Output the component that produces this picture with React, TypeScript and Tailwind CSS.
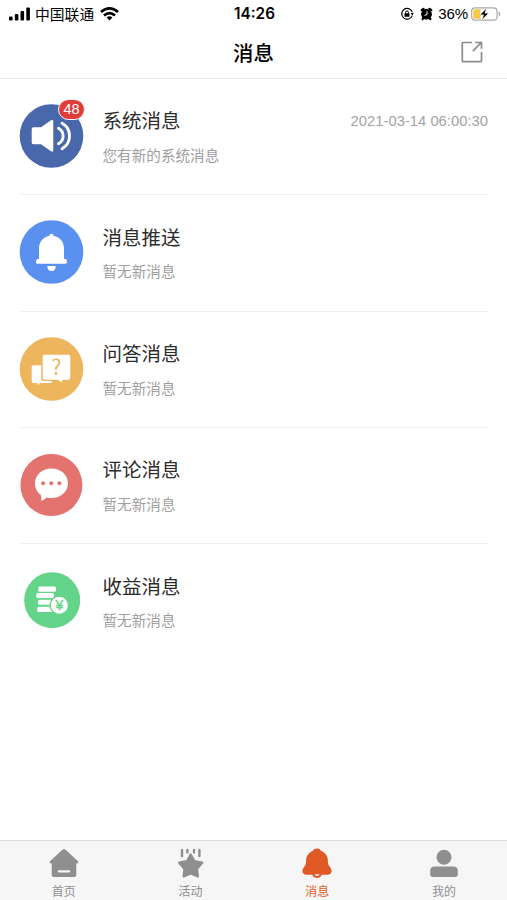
import React, { useState } from "react";
import clsx from "clsx";

interface IMessage {
  id: number;
  title: string;
  content: string;
  date?: string;
  count?: number;
  icon: JSX.Element;
}

interface ITab {
  name: string;
  icon: JSX.Element;
}

const SystemIcon = (
  <svg className="w-16 h-16 overflow-visible" viewBox="0.5 0 64 64">
    <circle cx="32" cy="32" r="31.8" fill="#4967ab" />
    <path
      d="M14 23.3h7.5L31.5 16.3q2.3-1.2 2.3 1v29q0 2.2-2.3 1L21.5 40.3H14q-1.8 0-1.8-1.8V25.1q0-1.8 1.8-1.8z"
      fill="#fff"
    />
    <path
      d="M39 24.3q4.6 2.6 4.6 7.7t-4.6 7.7M42.6 19.3q7.4 4.2 7.4 12.7t-7.4 12.7"
      fill="none"
      stroke="#fff"
      strokeWidth="2.9"
      strokeLinecap="round"
    />
  </svg>
);

const PushIcon = (
  <svg className="w-16 h-16 overflow-visible" viewBox="0.5 0 64 64">
    <circle cx="32" cy="32" r="31.8" fill="#5a90f0" />
    <path
      d="M32 13.8c1.5 0 2 1 2.3 2.2 6.4 1.2 10.2 6 10.2 12.5V39h1.4c2.1 0 2.1 4.8 0 4.8H18.1c-2.1 0-2.1-4.8 0-4.8h1.4V28.5c0-6.5 3.8-11.3 10.2-12.5.3-1.2.8-2.2 2.3-2.2z"
      fill="#fff"
    />
    <path d="M27.8 46h8.4q0 5-4.2 5t-4.2-5z" fill="#fff" />
  </svg>
);

const QuestionIcon = (
  <svg className="w-16 h-16 overflow-visible" viewBox="0.5 0 64 64">
    <circle cx="32" cy="32" r="31.8" fill="#edb55c" />
    <path
      d="M14 28.3h7.7v13.2q0 2.5 2.5 2.5h8v2H20.8l-1.8 2-1.8-2H14q-1.8 0-1.8-1.8V30.1q0-1.8 1.8-1.8z"
      fill="#fff"
    />
    <path
      d="M25 17.8h24q1.8 0 1.8 1.8v21.3q0 1.8-1.8 1.8h-5.3l-2.5 2.6-2.5-2.6H25q-1.8 0-1.8-1.8V19.6q0-1.8 1.8-1.8z"
      fill="#fff"
    />
    <text
      x="36.8"
      y="37.6"
      textAnchor="middle"
      fontSize="21.5"
      fill="#edb55c"
      fontFamily="Noto Sans CJK SC, sans-serif"
    >
      ?
    </text>
  </svg>
);

const CommentIcon = (
  <svg className="w-16 h-16 overflow-visible" viewBox="0.5 0 64 64">
    <circle cx="31.9" cy="32" r="31" fill="#e4736f" />
    <path
      d="M32 15.5c9.5 0 16.5 6.4 16.5 14.7S41.5 45 32 45c-1.7 0-3.3-.1-4.8-.6-1.7 1.7-3.5 2.8-5.7 3.4.6-1.6.5-3.7-.2-5.7-3.5-2.7-5.8-7-5.8-11.9 0-8.3 7-14.7 16.5-14.7z"
      fill="#fff"
    />
    <circle cx="23.6" cy="30.3" r="2" fill="#e4736f" />
    <circle cx="31.8" cy="30.3" r="2" fill="#e4736f" />
    <circle cx="39.9" cy="30.3" r="2" fill="#e4736f" />
  </svg>
);

const IncomeIcon = (
  <svg className="w-16 h-16 overflow-visible" viewBox="0.5 0.6 64 64">
    <circle cx="32.7" cy="31.8" r="28" fill="#63d48a" />
    <g fill="#fff">
      <rect x="18.8" y="18.1" width="17.7" height="5.2" rx="1.5" />
      <rect x="16.8" y="24.7" width="17.7" height="5" rx="1.5" />
      <rect x="18.6" y="31.4" width="15" height="5" rx="1.5" />
      <rect x="17.7" y="38.3" width="17" height="5.2" rx="1.5" />
    </g>
    <circle cx="39.8" cy="36.8" r="9.2" fill="#fff" stroke="#63d48a" strokeWidth="1.4" />
    <text
      x="39.8"
      y="41.7"
      textAnchor="middle"
      fontSize="14"
      fill="#63d48a"
      stroke="#63d48a"
      strokeWidth=".4"
      fontFamily="Liberation Sans, sans-serif"
    >
      ¥
    </text>
  </svg>
);

const messages: IMessage[] = [
  {
    id: 1,
    title: "系统消息",
    content: "您有新的系统消息",
    date: "2021-03-14 06:00:30",
    count: 48,
    icon: SystemIcon,
  },
  { id: 2, title: "消息推送", content: "暂无新消息", icon: PushIcon },
  { id: 3, title: "问答消息", content: "暂无新消息", icon: QuestionIcon },
  { id: 4, title: "评论消息", content: "暂无新消息", icon: CommentIcon },
  { id: 5, title: "收益消息", content: "暂无新消息", icon: IncomeIcon },
];

const tabs: ITab[] = [
  {
    name: "首页",
    icon: (
      <svg className="w-[30px] h-[30px]" viewBox="0 0 30 30">
        <path
          d="M13.7 1.5q1.3-1 2.6 0L28.8 13q1.3 1.7-.7 2.6h-.8v11.4q0 2-2 2H4.7q-2 0-2-2V15.6H1.9q-2-.9-.7-2.6z"
          fill="currentColor"
        />
        <rect x="8.8" y="22.3" width="12.4" height="2.3" rx="1" fill="#f6f6f6" />
      </svg>
    ),
  },
  {
    name: "活动",
    icon: (
      <svg className="w-[30px] h-[30px]" viewBox="0.3 0 30 30">
        <path
          d="M15 6.6l3.7 6.7 7.8 1.5-5.3 6.1.9 7.5L15 25.4l-7.1 3 .9-7.5-5.3-6.1 7.8-1.5z"
          fill="currentColor"
          stroke="currentColor"
          strokeWidth="2.4"
          strokeLinejoin="round"
        />
        <path
          d="M6.3 2v6M11.7 2v2.4M18.3 2v2.4M23.7 2v6"
          stroke="currentColor"
          strokeWidth="2.4"
          strokeLinecap="round"
        />
      </svg>
    ),
  },
  {
    name: "消息",
    icon: (
      <svg className="w-[30px] h-[30px]" viewBox="0 0 30 30">
        <path
          d="M15 .6c2 0 3.3.9 3.9 2.2 4.6 1.7 7 5.4 7 10 0 2.7.4 4.3 2 6.2 3 3.5 1.8 7.7-2.6 7.7h-5.6c-.5 1.9-2.2 3.2-4.7 3.2s-4.2-1.300-4.700-3.200H4.700c-4.400 0-5.600-4.200-2.600-7.700 1.600-1.900 2-3.500 2-6.200 0-4.600 2.400-8.300 7-10C11.700 1.500 13 .6 15 .6z"
          fill="currentColor"
        />
        <path d="M12.400 26.300h5.200q-.5 1.700-2.600 1.700t-2.600-1.700z" fill="#f6f6f6" />
      </svg>
    ),
  },
  {
    name: "我的",
    icon: (
      <svg className="w-[30px] h-[30px]" viewBox="0 0 30 30">
        <circle cx="15" cy="9.200" r="7.500" fill="currentColor" />
        <path
          d="M5.500 18.400h19q4.300 0 4.300 4.600v3q0 3-2.500 3H3.700q-2.500 0-2.500-3v-3q0-4.600 4.300-4.600z"
          fill="currentColor"
        />
      </svg>
    ),
  },
];

const StatusBar = (): JSX.Element => {
  return (
    <div className="flex justify-between items-center h-[27px] pl-[9px] pr-[6px] text-black">
      <div className="flex items-center w-[200px]">
        <svg className="w-[22px] h-[14px]" viewBox="0 0 22 14">
          <rect x="0" y="9.5" width="3.6" height="4" rx="1" />
          <rect x="5.8" y="7" width="3.6" height="6.5" rx="1" />
          <rect x="11.5" y="4" width="3.6" height="9.5" rx="1" />
          <rect x="17.3" y="0.5" width="3.6" height="13" rx="1" />
        </svg>
        <span className="ml-1 text-[14.8px] leading-5">中国联通</span>
        <svg className="w-[19px] h-[14px] ml-[6px]" viewBox="0 0 19 14">
          <g fill="none" stroke="#000" strokeWidth="2.6">
            <path d="M1 5q8.5-7.2 17 0" />
            <path d="M4 8.4q5.5-4.7 11 0" />
          </g>
          <path d="M9.5 13.4l-2.9-2.9q2.9-2.3 5.8 0z" />
        </svg>
      </div>
      <span className="pt-[2px] -ml-px text-[15.3px] font-semibold font-[Inter,sans-serif]">
        14:26
      </span>
      <div className="flex justify-end items-center w-[200px]">
        <svg className="w-[14px] h-[14px]" viewBox="0 0 14 14">
          <path
            d="M12.2 8.6A5.4 5.4 0 1 1 12.2 5"
            fill="none"
            stroke="#000"
            strokeWidth="1.2"
          />
          <path d="M10.6 6h3.2l-1.6 2.5z" />
          <rect x="4.5" y="6.2" width="5" height="3.6" rx=".6" />
          <path d="M5.6 6.5V5.2q0-1.2 1.4-1.2t1.4 1.2v1.3" fill="none" stroke="#000" />
        </svg>
        <svg className="w-[13px] h-[14px] ml-[6px]" viewBox="0 0 13 14">
          <circle cx="6.5" cy="7.2" r="5.4" />
          <path
            d="M1.7 3.2L3.5 1.8M11.3 3.2L9.5 1.8M2.6 12l1.5-2M10.4 12l-1.5-2"
            stroke="#000"
            strokeWidth="2.2"
            strokeLinecap="round"
          />
          <path d="M7 4.3v3.3L4.5 8.4" fill="none" stroke="#fff" />
        </svg>
        <span className="ml-[5px] pt-px text-[15px] tracking-[-0.1px] font-['Liberation_Sans',sans-serif]">
          36%
        </span>
        <svg className="w-[30px] h-[14px] ml-[3px]" viewBox="0 0 30 14">
          <rect
            x=".7"
            y=".8"
            width="25.4"
            height="12.4"
            rx="3.5"
            fill="#fff"
            stroke="#aaa"
            strokeWidth="1.2"
          />
          <path d="M4 2.3h5.5v9.4H4q-1.7 0-1.7-1.7V4q0-1.7 1.7-1.7z" fill="#f7c945" />
          <path d="M27.6 4.8q1.8.5 1.8 2.2t-1.8 2.2z" fill="#aaa" />
          <path
            d="M15.3 1.5L9.3 7.8h3.5L11.2 12.500l6.200-6.300h-3.600z"
            stroke="#fff"
            strokeWidth=".3"
          />
        </svg>
      </div>
    </div>
  );
};

const Header = (): JSX.Element => {
  return (
    <div className="grid grid-cols-3 items-center h-[52px] px-6 border-b border-[#e6e6e6]">
      <p className="col-start-2 text-center text-[20.4px] font-medium text-black">
        消息
      </p>
      <button className="justify-self-end -mt-[2px]">
        <svg
          className="w-[22px] h-[22px]"
          viewBox="0 0 22 22"
          fill="none"
          stroke="#8c8c8c"
          strokeWidth="1.7"
        >
          <path d="M11 1.5H2.3q-1 0-1 1v17.2q0 1 1 1h17.2q1 0 1-1V11" />
          <path d="M11.8 10.2l8.5-8.7M14.2 1.5h6.3v6.2" />
        </svg>
      </button>
    </div>
  );
};

const MessageItem = ({ message }: { message: IMessage }): JSX.Element => {
  return (
    <div className="flex h-[116.3px] ml-5 mr-[19px] border-b border-[#efefef] last:border-b-0">
      <div className="relative w-16 h-16 mt-[25px] shrink-0">
        {message.icon}
        {message.count && (
          <span className="absolute -top-[5px] left-[38px] flex justify-center items-center w-[27px] h-[21px] rounded-full border border-white bg-[#e03c3a] text-[14.5px] text-white font-['Liberation_Sans',sans-serif]">
            {message.count}
          </span>
        )}
      </div>
      <div className="flex flex-col flex-1 ml-[18.5px] mt-[27px]">
        <div className="flex justify-between items-center h-7">
          <p className="text-[19.5px] text-[#2c2c2c]">{message.title}</p>
          {message.date && (
            <p className="pt-[2px] text-[14.8px] text-[#a3a3a3] font-['Liberation_Sans',sans-serif]">
              {message.date}
            </p>
          )}
        </div>
        <p className="mt-[11px] text-[14.6px] leading-5 text-[#a0a0a0]">
          {message.content}
        </p>
      </div>
    </div>
  );
};

const App = (): JSX.Element => {
  const [current, setCurrent] = useState<string>("消息");

  return (
    <div className="flex flex-col w-full h-screen overflow-hidden bg-white font-['Noto_Sans_CJK_SC',sans-serif]">
      <StatusBar />
      <Header />
      <div className="flex-1">
        {messages.map((message) => (
          <MessageItem key={message.id} message={message} />
        ))}
      </div>
      <div className="grid grid-cols-4 h-[60px] border-t border-[#dcdcdc] bg-[#f6f6f6]">
        {tabs.map((tab) => (
          <button
            key={tab.name}
            className={clsx(
              "flex flex-col items-center pt-[7px] pl-px",
              current === tab.name ? "text-[#e05a25]" : "text-[#8f8f8f]"
            )}
            onClick={() => setCurrent(tab.name)}
          >
            {tab.icon}
            <span className="mt-[5px] text-[12px] leading-4">{tab.name}</span>
          </button>
        ))}
      </div>
    </div>
  );
};

export default App;
